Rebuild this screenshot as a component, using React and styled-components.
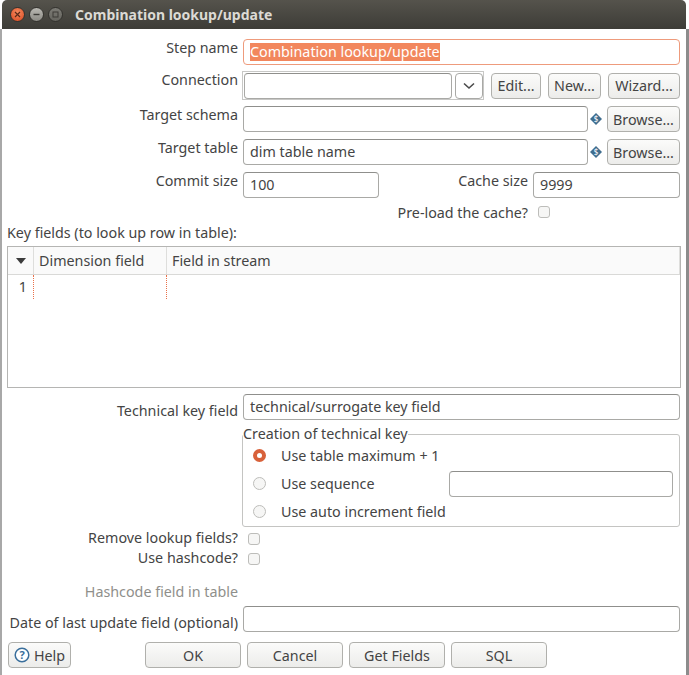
import React from 'react';
import styled, { createGlobalStyle } from 'styled-components';

const Global = createGlobalStyle`
  html, body { margin: 0; padding: 0; background: #fff; }
  body { font-family: "Noto Sans", "Open Sans", sans-serif; font-size: 14.3px; color: #444; }
`;

const Win = styled.div`
  width: 689px;
  height: 675px;
  overflow: hidden;
  display: flex;
  flex-direction: column;
`;

const TitleBar = styled.div`
  height: 29px;
  flex: none;
  display: flex;
  align-items: center;
  margin-left: 2px;
  margin-right: 3px;
  padding-left: 8px;
  border-radius: 5px 5px 0 0;
  background: linear-gradient(#55534c, #3d3c37);
`;

const WinBtn = styled.span`
  width: 15px;
  height: 15px;
  border-radius: 50%;
  margin-right: 4px;
  display: flex;
  align-items: center;
  justify-content: center;
  background: ${p => p.$bg};
  border: 0.5px solid #33322e;
  box-sizing: border-box;
`;

const Title = styled.div`
  margin-left: 8px;
  color: #dcdad5;
  font-weight: 700;
  font-size: 14px;
`;

const Body = styled.div`
  flex: 1;
  display: flex;
  flex-direction: column;
  border-left: 2px solid #a8a8a8;
  border-right: 3px solid #8c8c8c;
  padding: 10px 6px 0 0;
`;

const Row = styled.div`
  display: grid;
  grid-template-columns: 236px 1fr;
  column-gap: 5px;
  height: ${p => p.$h || 26}px;
  margin-top: ${p => p.$top || 0}px;
`;

const Label = styled.div`
  text-align: right;
  line-height: 18px;
  white-space: nowrap;
  align-self: ${p => (p.$low ? 'end' : 'start')};
  color: ${p => (p.$off ? '#8f8f8b' : '#444')};
`;

const Field = styled.div`
  display: flex;
  align-items: center;
  gap: ${p => p.$gap || 0}px;
  min-width: 0;
`;

const Input = styled.div`
  box-sizing: border-box;
  height: 26px;
  flex: ${p => (p.$w ? 'none' : 1)};
  width: ${p => (p.$w ? `${p.$w}px` : 'auto')};
  min-width: 0;
  line-height: 24px;
  padding-left: 6px;
  white-space: nowrap;
  background: #fff;
  border: 1px solid ${p => (p.$focus ? '#ee9b7c' : '#a9a9a6')};
  border-top-color: ${p => (p.$focus ? '#ee9b7c' : '#8f8f8c')};
  border-radius: 4px;
`;

const SeqInput = styled(Input)`
  margin-top: 2px;
`;

const Selected = styled.span`
  display: inline-block;
  line-height: 18px;
  background: #f2875d;
  color: #fff;
`;

const Btn = styled.div`
  box-sizing: border-box;
  height: 26px;
  width: ${p => p.$w}px;
  flex: none;
  display: flex;
  align-items: center;
  justify-content: center;
  gap: 4px;
  white-space: nowrap;
  border: 1px solid #b0b0ac;
  border-radius: 4px;
  background: linear-gradient(#fbfbfa, #ececea);
`;

const BrowseBtn = styled(Btn)`
  margin-left: 3px;
`;

const Combo = styled.div`
  box-sizing: border-box;
  width: 243px;
  height: 29px;
  margin-left: -1px;
  padding: 1px 0 1px 1px;
  display: flex;
  gap: 3px;
  border: 1px solid #c8c8c6;
`;

const Arrow = styled.div`
  box-sizing: border-box;
  width: 28px;
  height: 26px;
  flex: none;
  display: flex;
  align-items: center;
  justify-content: center;
  border: 1px solid #a9a9a6;
  border-radius: 4px;
`;

const Split = styled.div`
  display: grid;
  grid-template-columns: 136px 1fr 147px;
  align-items: start;
  column-gap: 5px;
`;

const Check = styled.span`
  box-sizing: border-box;
  width: 12px;
  height: 12px;
  flex: none;
  display: block;
  margin-left: ${p => p.$left || 0}px;
  margin-right: ${p => p.$right || 0}px;
  border: 1px solid #bdbdba;
  border-radius: 3px;
  background: #f6f6f5;
`;

const CheckRow = styled.div`
  display: flex;
  align-items: center;
  justify-content: flex-end;
  height: 20px;
  margin-top: ${p => p.$top || 0}px;
`;

const LeftTitle = styled.div`
  margin: 2px 0 0 5px;
  line-height: 18px;
  height: 18px;
`;

const Table = styled.div`
  box-sizing: border-box;
  margin: 4px -1px 0 5px;
  height: 142px;
  border: 1px solid #b5b5b3;
`;

const THead = styled.div`
  display: grid;
  grid-template-columns: 26px 133px 1fr;
  height: 27px;
  background: #fafafa;
  border-bottom: 1px solid #d9d9d7;
`;

const Th = styled.div`
  display: flex;
  align-items: center;
  justify-content: ${p => (p.$center ? 'center' : 'flex-start')};
  padding-left: ${p => (p.$center ? 0 : 5)}px;
  border-right: 1px solid #dededc;
`;

const TRow = styled.div`
  display: grid;
  grid-template-columns: 26px 133px 1fr;
  height: 23px;
  line-height: 24px;
`;

const Td = styled.div`
  text-align: right;
  padding-right: 6px;
  border-right: 1px dotted ${p => (p.$accent ? '#e9714a' : 'transparent')};
`;

const Group = styled.fieldset`
  box-sizing: border-box;
  margin: 0 0 0 -1px;
  padding: 0 6px 0 10px;
  height: 102px;
  min-width: 0;
  border: 1px solid #c4c4c2;
  border-radius: 3px;
`;

const Legend = styled.legend`
  padding: 0;
  margin: 0 0 -2px -10px;
  line-height: 18px;
  background: #fff;
`;

const Option = styled.div`
  display: flex;
  align-items: center;
  height: 28px;
  gap: 15px;
`;

const Radio = styled.span`
  box-sizing: border-box;
  width: 13px;
  height: 13px;
  flex: none;
  border-radius: 50%;
  display: block;
  border: ${p => (p.$on ? '4px solid #d8613a' : '1px solid #bdbdba')};
  background: ${p => (p.$on ? '#fff' : '#f6f6f5')};
`;

const OptionText = styled.span`
  width: 155px;
  white-space: nowrap;
`;

const Footer = styled.div`
  display: flex;
  margin-top: 10px;
  padding-left: 6px;
`;

const FootBtns = styled.div`
  display: flex;
  gap: 6px;
  margin-left: 74px;
`;

function Dollar() {
  return (
    <svg width="12" height="12" viewBox="0 0 12 12">
      <path d="M6 0 L12 6 L6 12 L0 6 Z" fill="#3f6d8e" />
      <text x="6" y="8.8" textAnchor="middle" fontSize="8" fill="#fff" fontFamily="Noto Sans">$</text>
    </svg>
  );
}

function Chevron() {
  return (
    <svg width="12" height="8" viewBox="0 0 12 8">
      <path d="M1 1.5 L6 6 L11 1.5" fill="none" stroke="#4a4a4a" strokeWidth="1.6" />
    </svg>
  );
}

function HelpIcon() {
  return (
    <svg width="16" height="16" viewBox="0 0 16 16">
      <circle cx="8" cy="8" r="6.8" fill="#fff" stroke="#3a6f9c" strokeWidth="1.5" />
      <text x="8" y="12" textAnchor="middle" fontSize="11" fontWeight="700" fill="#3a6f9c" fontFamily="Noto Sans">?</text>
    </svg>
  );
}

export default function App() {
  return (
    <Win>
      <Global />
      <TitleBar>
        <WinBtn $bg="radial-gradient(circle at 50% 35%, #f58a5f, #d9481f)">
          <svg width="7" height="7" viewBox="0 0 7 7"><path d="M1 1 L6 6 M6 1 L1 6" stroke="#5b2a18" strokeWidth="1.2" /></svg>
        </WinBtn>
        <WinBtn $bg="linear-gradient(#b9b8b2, #8c8b85)">
          <svg width="7" height="7" viewBox="0 0 7 7"><path d="M0.5 3.5 L6.5 3.5" stroke="#3c3b37" strokeWidth="1.4" /></svg>
        </WinBtn>
        <WinBtn $bg="linear-gradient(#7c7b75, #65645e)">
          <svg width="7" height="7" viewBox="0 0 7 7"><rect x="1" y="1" width="5" height="5" fill="none" stroke="#3c3b37" strokeWidth="1" /></svg>
        </WinBtn>
        <Title>Combination lookup/update</Title>
      </TitleBar>
      <Body>
        <Row>
          <Label>Step name</Label>
          <Field><Input $focus><Selected>Combination lookup/update</Selected></Input></Field>
        </Row>
        <Row $top={6} $h={29}>
          <Label>Connection</Label>
          <Field $gap={7}>
            <Combo><Input /><Arrow><Chevron /></Arrow></Combo>
            <Btn $w={50}>Edit...</Btn>
            <Btn $w={53}>New...</Btn>
            <Btn $w={72}>Wizard...</Btn>
          </Field>
        </Row>
        <Row $top={6}>
          <Label>Target schema</Label>
          <Field $gap={2}>
            <Input />
            <Dollar />
            <BrowseBtn $w={73}>Browse...</BrowseBtn>
          </Field>
        </Row>
        <Row $top={7}>
          <Label>Target table</Label>
          <Field $gap={2}>
            <Input>dim table name</Input>
            <Dollar />
            <BrowseBtn $w={73}>Browse...</BrowseBtn>
          </Field>
        </Row>
        <Row $top={7}>
          <Label>Commit size</Label>
          <Split>
            <Input>100</Input>
            <Label>Cache size</Label>
            <Input>9999</Input>
          </Split>
        </Row>
        <CheckRow $top={4}>
          Pre-load the cache?
          <Check $left={10} $right={130} />
        </CheckRow>
        <LeftTitle>Key fields (to look up row in table):</LeftTitle>
        <Table>
          <THead>
            <Th $center>
              <svg width="10" height="6" viewBox="0 0 10 6"><path d="M0 0 L10 0 L5 6 Z" fill="#3c3c3c" /></svg>
            </Th>
            <Th>Dimension field</Th>
            <Th>Field in stream</Th>
          </THead>
          <TRow>
            <Td $accent>1</Td>
            <Td $accent />
          </TRow>
        </Table>
        <Row $top={6}>
          <Label $low>Technical key field</Label>
          <Field><Input>technical/surrogate key field</Input></Field>
        </Row>
        <Row $top={5} $h={103}>
          <span />
          <Group>
            <Legend>Creation of technical key</Legend>
            <Option><Radio $on /><OptionText>Use table maximum + 1</OptionText></Option>
            <Option><Radio /><OptionText>Use sequence</OptionText><SeqInput $w={224} /></Option>
            <Option><Radio /><OptionText>Use auto increment field</OptionText></Option>
          </Group>
        </Row>
        <Row $top={1} $h={20}>
          <Label>Remove lookup fields?</Label>
          <Field><Check $left={5} /></Field>
        </Row>
        <Row $h={20}>
          <Label>Use hashcode?</Label>
          <Field><Check $left={5} /></Field>
        </Row>
        <Row $top={6} $h={26}>
          <Label $off $low>Hashcode field in table</Label>
          <span />
        </Row>
        <Row $top={5}>
          <Label $low>Date of last update field (optional)</Label>
          <Field><Input /></Field>
        </Row>
        <Footer>
          <Btn $w={63}><HelpIcon />Help</Btn>
          <FootBtns>
            <Btn $w={96}>OK</Btn>
            <Btn $w={96}>Cancel</Btn>
            <Btn $w={96}>Get Fields</Btn>
            <Btn $w={96}>SQL</Btn>
          </FootBtns>
        </Footer>
      </Body>
    </Win>
  );
}
